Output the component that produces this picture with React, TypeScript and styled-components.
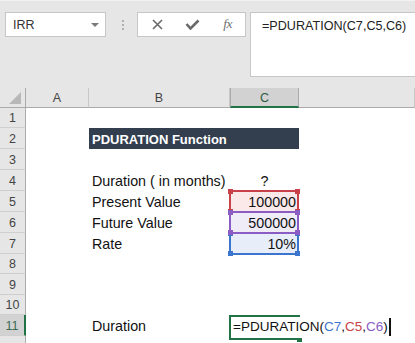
import styled, { createGlobalStyle, css } from "styled-components";

const GlobalStyle = createGlobalStyle`
  html, body {
    margin: 0;
    padding: 0;
    background: #ffffff;
  }
  body {
    font-family: "Liberation Sans", Arial, sans-serif;
  }
  * {
    box-sizing: border-box;
  }
`;

const Window = styled.div`
  width: 415px;
  height: 343px;
  overflow: hidden;
  background: #ffffff;
`;

/* ---------- formula bar ---------- */

const Toolbar = styled.div`
  height: 88px;
  background: #e6e6e6;
  border-top: 1px solid #f2f2f2;
  display: flex;
  align-items: flex-start;
  padding: 11px 0 0 5px;
`;

const NameBox = styled.div`
  width: 101px;
  height: 25px;
  background: #ffffff;
  border: 1px solid #c6c6c6;
  display: flex;
  align-items: center;
  justify-content: space-between;
  padding: 0 6px 0 7px;
  font-size: 12.5px;
  color: #333333;
`;

const Caret = styled.span`
  width: 0;
  height: 0;
  border-left: 4px solid transparent;
  border-right: 4px solid transparent;
  border-top: 4px solid #7a7a7a;
  margin-top: 1px;
`;

const Grip = styled.div`
  margin: 8px 13px 0 16px;
  display: flex;
  flex-direction: column;
  gap: 2px;

  span {
    width: 2px;
    height: 2px;
    background: #b0b0b0;
  }
`;

const FxBox = styled.div`
  width: 109px;
  height: 25px;
  background: #ffffff;
  border: 1px solid #c6c6c6;
  display: grid;
  grid-template-columns: repeat(3, 1fr);
  padding-left: 2px;
`;

const FxSlot = styled.div`
  display: flex;
  align-items: center;
  justify-content: center;
  color: #707070;
`;

const FxLabel = styled.span`
  font-family: "Liberation Serif", "Times New Roman", serif;
  font-style: italic;
  font-size: 13.5px;
  letter-spacing: -0.5px;
  margin-top: -1px;
`;

const FormulaBox = styled.div`
  flex: 1;
  height: 65px;
  margin-left: 4px;
  background: #ffffff;
  border: 1px solid #c6c6c6;
  border-right: none;
  padding: 6px 0 0 11px;
  font-size: 12.6px;
  color: #222222;
  white-space: nowrap;
`;

/* ---------- sheet ---------- */

const Sheet = styled.div`
  display: flex;
  flex-direction: column;
`;

const Row = styled.div<{ $h: number }>`
  display: grid;
  grid-template-columns: 26px 63px 141px 69px 1fr;
  height: ${({ $h }) => $h}px;
`;

const CornerCell = styled.div`
  background: #e6e6e6;
  border-right: 1px solid #ababab;
  border-bottom: 1px solid #ababab;
  display: flex;
  align-items: flex-end;
  justify-content: flex-end;
  padding: 0 4px 3px 0;
`;

const ColHead = styled.div<{ $active?: boolean }>`
  background: #e6e6e6;
  border-right: 1px solid #c8c8c8;
  border-bottom: 1px solid #ababab;
  display: flex;
  align-items: center;
  justify-content: center;
  font-size: 12.5px;
  color: #444444;
  padding-top: 1px;

  ${({ $active }) =>
    $active &&
    css`
      background: #d2d2d2;
      border-right-color: #ababab;
      border-left: 1px solid #ababab;
      border-bottom: 2px solid #217346;
      color: #2f5a40;
    `}
`;

const RowHead = styled.div<{ $active?: boolean }>`
  background: #e6e6e6;
  border-right: 1px solid #ababab;
  border-bottom: 1px solid #cfcfcf;
  display: flex;
  align-items: center;
  justify-content: center;
  font-size: 12.5px;
  color: #444444;
  padding-top: 1px;

  ${({ $active }) =>
    $active &&
    css`
      background: #d2d2d2;
      border-right: 2px solid #217346;
      color: #3d6b4f;
    `}
`;

const Cell = styled.div<{ $align?: "left" | "right" | "center"; $tint?: string }>`
  position: relative;
  display: flex;
  align-items: flex-end;
  justify-content: ${({ $align }) =>
    $align === "right" ? "flex-end" : $align === "center" ? "center" : "flex-start"};
  padding: 0 3px 1px 3px;
  font-size: 14.3px;
  line-height: 17px;
  color: #111111;
  white-space: nowrap;
  background: ${({ $tint }) => $tint || "transparent"};
`;

const Banner = styled.div`
  grid-column: 3 / 5;
  background: #333f4f;
  color: #ffffff;
  font-weight: bold;
  font-size: 13px;
  display: flex;
  align-items: center;
  padding: 1px 0 0 3px;
`;

const RefBox = styled.div<{ $color: string; $z: number }>`
  position: absolute;
  top: -1px;
  left: -1px;
  right: 0;
  bottom: -1px;
  border: 2px solid ${({ $color }) => $color};
  z-index: ${({ $z }) => $z};

  span {
    position: absolute;
    width: 5px;
    height: 5px;
    background: ${({ $color }) => $color};
  }
  span:nth-child(1) { top: -3px; left: -3px; }
  span:nth-child(2) { top: -3px; right: -3px; }
  span:nth-child(3) { bottom: -3px; left: -3px; }
  span:nth-child(4) { bottom: -3px; right: -3px; }
`;

const EditBox = styled.div`
  position: absolute;
  top: 0;
  left: -1px;
  width: 71px;
  height: 25px;
  border: 2px solid #217346;
  border-right: none;
  z-index: 3;

  &::after {
    content: "";
    position: absolute;
    right: -2px;
    bottom: -4px;
    width: 5px;
    height: 4px;
    background: #217346;
  }
`;

const EditText = styled.span`
  position: relative;
  z-index: 4;
  font-size: 13.5px;
  display: flex;
  align-items: flex-end;
`;

const Ref = styled.span<{ $color: string }>`
  color: ${({ $color }) => $color};
`;

const TextCursor = styled.span`
  display: inline-block;
  width: 2px;
  height: 18px;
  background: #111111;
  margin-left: 1px;
  margin-bottom: -1px;
`;

const RED = "#c8414a";
const PURPLE = "#8b5dc4";
const BLUE = "#3b75cd";

const rowHeights = [20, 21, 21, 21, 21, 21, 21, 20, 21, 20, 21, 21];

const Corners = () => (
  <>
    <span />
    <span />
    <span />
    <span />
  </>
);

const App = () => {
  const renderRow = (n: number) => {
    const h = rowHeights[n - 1];
    // row 12 only peeks in at the bottom edge, its number is below the fold
    const head = <RowHead $active={n === 11}>{n < 12 ? n : null}</RowHead>;

    if (n === 2) {
      return (
        <Row $h={h} key={n}>
          {head}
          <Cell />
          <Banner>PDURATION Function</Banner>
          <Cell />
        </Row>
      );
    }

    let label = "";
    let value: React.ReactNode = null;
    let tint: string | undefined;
    let box: React.ReactNode = null;
    let align: "left" | "right" | "center" = "right";

    if (n === 4) {
      label = "Duration ( in months)";
      value = "?";
      align = "center";
    } else if (n === 5) {
      label = "Present Value";
      value = "100000";
      tint = "#fbe8e8";
      box = (
        <RefBox $color={RED} $z={1}>
          <Corners />
        </RefBox>
      );
    } else if (n === 6) {
      label = "Future Value";
      value = "500000";
      tint = "#f0ecf7";
      box = (
        <RefBox $color={PURPLE} $z={3}>
          <Corners />
        </RefBox>
      );
    } else if (n === 7) {
      label = "Rate";
      value = "10%";
      tint = "#e7eef9";
      box = (
        <RefBox $color={BLUE} $z={2}>
          <Corners />
        </RefBox>
      );
    } else if (n === 11) {
      label = "Duration";
      align = "left";
      box = <EditBox />;
      value = (
        <EditText>
          =PDURATION(<Ref $color={BLUE}>C7</Ref>,<Ref $color={RED}>C5</Ref>,
          <Ref $color={PURPLE}>C6</Ref>)
          <TextCursor />
        </EditText>
      );
    }

    return (
      <Row $h={h} key={n}>
        {head}
        <Cell />
        <Cell>{label}</Cell>
        <Cell $align={align} $tint={tint}>
          {box}
          {value}
        </Cell>
        <Cell />
      </Row>
    );
  };

  return (
    <Window>
      <GlobalStyle />
      <Toolbar>
        <NameBox>
          IRR
          <Caret />
        </NameBox>
        <Grip>
          <span />
          <span />
          <span />
        </Grip>
        <FxBox>
          <FxSlot>
            <svg width="11" height="11" viewBox="0 0 11 11">
              <path d="M1 1 L10 10 M10 1 L1 10" stroke="#6a6a6a" strokeWidth="1.6" fill="none" />
            </svg>
          </FxSlot>
          <FxSlot>
            <svg width="15" height="11" viewBox="0 0 15 11">
              <path d="M1.5 5 L5.5 9.5 L13.5 1.5" stroke="#6a6a6a" strokeWidth="2.6" fill="none" />
            </svg>
          </FxSlot>
          <FxSlot>
            <FxLabel>fx</FxLabel>
          </FxSlot>
        </FxBox>
        <FormulaBox>=PDURATION(C7,C5,C6)</FormulaBox>
      </Toolbar>

      <Sheet>
        <Row $h={20}>
          <CornerCell>
            <svg width="12" height="12" viewBox="0 0 12 12">
              <polygon points="12,0 12,12 0,12" fill="#b8b8b8" />
            </svg>
          </CornerCell>
          <ColHead>A</ColHead>
          <ColHead>B</ColHead>
          <ColHead $active>C</ColHead>
          <ColHead />
        </Row>
        {Array.from({ length: 12 }, (_, i) => renderRow(i + 1))}
      </Sheet>
    </Window>
  );
};

export default App;
